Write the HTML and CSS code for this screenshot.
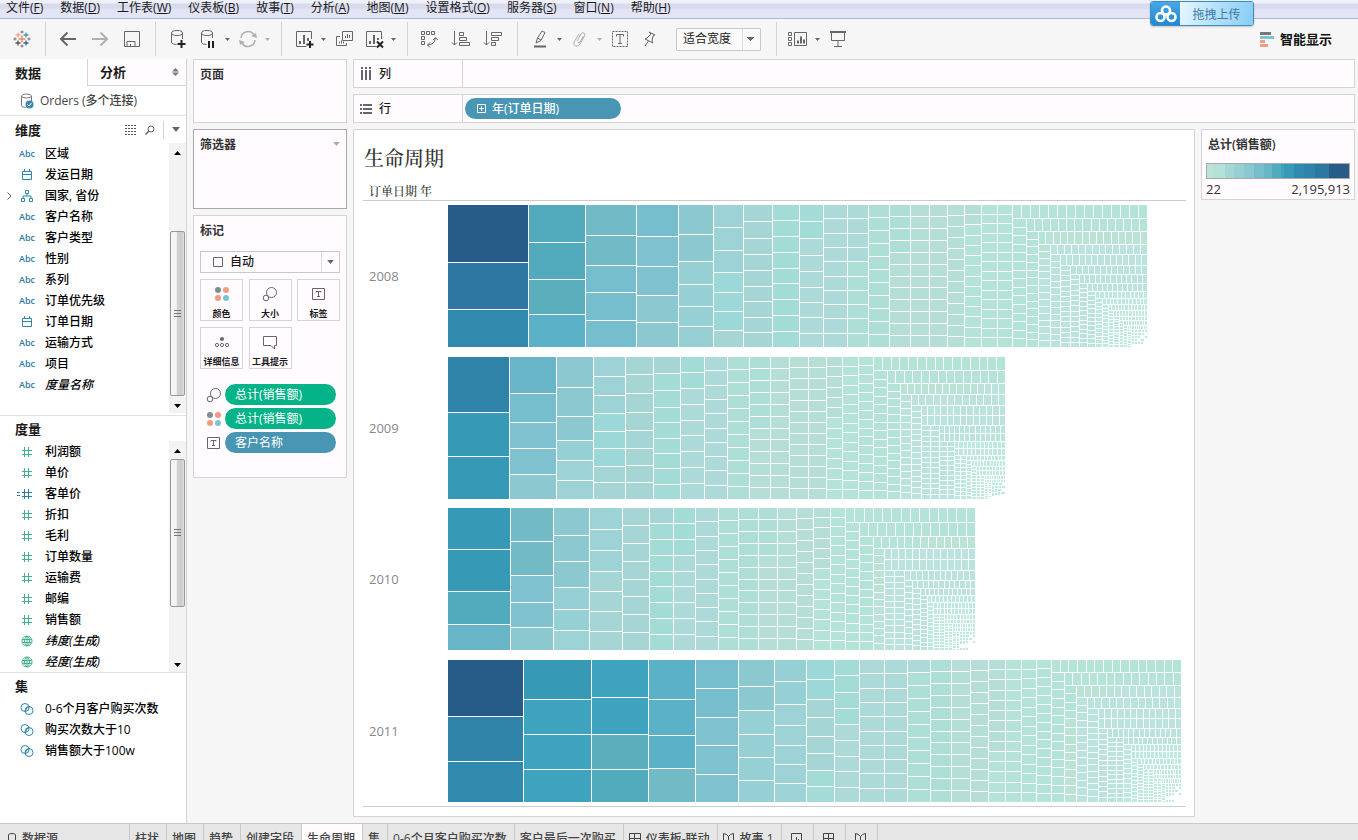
FILE: index.html
```html
<!DOCTYPE html>
<html lang="zh-CN">
<head>
<meta charset="utf-8">
<title>生命周期</title>
<link rel="stylesheet" href="styles.css">
</head>
<body>
<svg class="defs" aria-hidden="true">
  <symbol id="i-caret" viewBox="0 0 5 3"><path d="M0 0h5L2.500 3z" fill="currentColor"/></symbol>
  <symbol id="i-hash" viewBox="0 0 14 14"><path d="M4.500 2v10M8.500 2v10M2 5.500h10M2 9.500h10" class="st"/></symbol>
  <symbol id="i-calchash" viewBox="0 0 18 14"><path d="M8.500 2v10M12.500 2v10M6 5.500h10M6 9.500h10M1 5.500h3M1 8.500h3" class="st"/></symbol>
  <symbol id="i-date" viewBox="0 0 14 14"><path d="M2.500 3.500h9v8h-9zM2 6.500h10M4.500 1v3M9.500 1v3" class="st"/></symbol>
  <symbol id="i-tree" viewBox="0 0 14 14"><path d="M5.500 1.500h3v3h-3zM1.500 9.500h3v3h-3zM9.500 9.500h3v3h-3zM7 5v2M3 9V7h8v2" class="st"/></symbol>
  <symbol id="i-globe" viewBox="0 0 14 14"><path d="M7 2a5 5 0 1 0 0 10A5 5 0 1 0 7 2M7 2c-3.500 3-3.500 7 0 10M7 2c3.500 3 3.500 7 0 10M2.500 5.500h9M2.500 8.500h9M7 2v10" class="st"/></symbol>
  <symbol id="i-set" viewBox="0 0 14 14"><circle cx="5" cy="5.500" r="4" class="st"/><circle cx="9" cy="8.500" r="4" class="st"/><path d="M5.500 9.500q0-4 4-5" class="st"/></symbol>
  <symbol id="i-size" viewBox="0 0 16 16"><circle cx="9.500" cy="6.500" r="5" class="st"/><circle cx="4" cy="12" r="2.800" fill="#fffbff" stroke="currentColor"/></symbol>
  <symbol id="i-color" viewBox="0 0 16 16"><circle cx="4" cy="4" r="3" fill="#858b8c"/><circle cx="12" cy="4" r="3" fill="#f09c82"/><circle cx="4" cy="12" r="3" fill="#f09c82"/><circle cx="12" cy="12" r="3" fill="#7cc3d1"/></symbol>
  <symbol id="i-label" viewBox="0 0 16 16"><path d="M1.500 2.500h12v11h-12z" class="st"/><path d="M5 6.500v-1h5v1M7.500 5.500v5M6 10.500h3" class="st"/></symbol>
  <symbol id="i-detail" viewBox="0 0 16 16"><circle cx="8" cy="5" r="2" fill="currentColor"/><circle cx="3" cy="11" r="1.600" class="st"/><circle cx="8" cy="11" r="1.600" class="st"/><circle cx="13" cy="11" r="1.600" class="st"/></symbol>
  <symbol id="i-tip" viewBox="0 0 16 16"><path d="M1.500 2.500h13v9h-2v3.500l-3.500-3.500h-7.500z" class="st"/></symbol>
</svg>

<nav class="menu">
  <button>文件(<u>F</u>)</button><button>数据(<u>D</u>)</button><button>工作表(<u>W</u>)</button><button>仪表板(<u>B</u>)</button><button>故事(<u>T</u>)</button><button>分析(<u>A</u>)</button><button>地图(<u>M</u>)</button><button>设置格式(<u>O</u>)</button><button>服务器(<u>S</u>)</button><button>窗口(<u>N</u>)</button><button>帮助(<u>H</u>)</button>
</nav>
<button class="upload">
  <span class="upload-logo"><svg width="22" height="18" viewBox="0 0 22 18"><g fill="none" stroke="#fff" stroke-width="2.600"><circle cx="11" cy="5.500" r="4"/><circle cx="5.500" cy="12" r="4"/><circle cx="16.500" cy="12" r="4"/></g></svg></span>
  <span class="upload-text">拖拽上传</span>
</button>

<header class="toolbar">
  <div class="group home"><button class="tool" aria-label="开始"><svg width="18" height="18" viewBox="0 0 18 18"><g fill="none" stroke-width="1.300"><path d="M9 5.500v7M5.500 9h7" stroke="#f08a68" stroke-width="1.500"/><path d="M5 2.500v5M2.500 5h5" stroke="#eea78c"/><path d="M13 2.500v5M10.500 5h5" stroke="#4a93b0"/><path d="M5 10.500v5M2.500 13h5" stroke="#555"/><path d="M13 10.500v5M10.500 13h5" stroke="#2e6b98"/><path d="M9 .5v3M7.500 2h3M9 14.500v3M7.500 16h3M2 7.500v3M.5 9h3M16 7.500v3M14.500 9h3" stroke="#888"/></g></svg></button></div>
  <div class="group wide">
    <button class="tool" aria-label="后退"><svg width="18" height="18"><path d="M2 9h15M8.500 2.500L2 9l6.500 6.500" class="st" stroke-width="2"/></svg></button>
    <button class="tool off" aria-label="前进"><svg width="18" height="18"><path d="M1 9h15M9.500 2.500L16 9l-6.500 6.500" class="st" stroke-width="2"/></svg></button>
    <button class="tool" aria-label="保存"><svg width="18" height="18"><path d="M1.500 1.500h15v15h-15zM4 16v-4.500h8V16M7.500 14v2" class="st"/></svg></button>
  </div>
  <div class="group g3">
    <button class="tool" aria-label="新建数据源"><svg width="18" height="20"><path d="M13.500 4v6M2.500 4v9.500q1 2 5 2M2.500 4q0-2.500 5.500-2.500T13.500 4 8 6.500 2.500 4" class="st"/><path d="M12.500 11v8M8.500 15h8" stroke="#222" stroke-width="2"/></svg></button>
    <div class="split"><button class="tool" aria-label="暂停"><svg width="18" height="20"><path d="M13.500 4v5M2.500 4v9.500q1 2 5 2M2.500 4q0-2.500 5.500-2.500T13.500 4 8 6.500 2.500 4" class="st"/><path d="M10 12v7M14 12v7" stroke="#222" stroke-width="2"/></svg></button><button class="drop" aria-label="更多"><svg width="5" height="3"><use href="#i-caret"/></svg></button></div>
    <div class="split off"><button class="tool" aria-label="刷新"><svg width="18" height="18"><path d="M2 8a7 7 0 0 1 13-3M16 10a7 7 0 0 1-13 3" class="st" stroke-width="1.500"/><path d="M12 6l6 2-1-5zM6 12l-6-2 1 5z" fill="currentColor"/></svg></button><button class="drop" aria-label="更多"><svg width="5" height="3"><use href="#i-caret"/></svg></button></div>
  </div>
  <div class="group g4">
    <div class="split"><button class="tool" aria-label="新建工作表"><svg width="20" height="20"><path d="M17.500 10V2.500h-15v15h10" class="st"/><path d="M6 15v-3M10 15V6M14 12V9" stroke="currentColor" stroke-width="2"/><path d="M16 12v7M12.500 15.500h7" stroke="#222" stroke-width="2"/></svg></button><button class="drop" aria-label="更多"><svg width="5" height="3"><use href="#i-caret"/></svg></button></div>
    <button class="tool" aria-label="复制"><svg width="18" height="18"><path d="M7.500 1.500h10v9h-10zM5 6.500H1.500v9h10V13M10.500 8V6M12.500 8V4M14.500 8V5M4.500 13.500v-2M6.500 13.500v-3M8.500 13.500v-2" class="st"/></svg></button>
    <div class="split"><button class="tool" aria-label="清除"><svg width="20" height="20"><path d="M17.500 10V2.500h-15v15h10" class="st"/><path d="M6 15v-3M10 15V6M14 11V9" stroke="currentColor" stroke-width="2"/><path d="M13 12.500l6 6M19 12.500l-6 6" stroke="#222" stroke-width="2"/></svg></button><button class="drop" aria-label="更多"><svg width="5" height="3"><use href="#i-caret"/></svg></button></div>
  </div>
  <div class="group wide g5">
    <button class="tool" aria-label="交换行和列"><svg width="18" height="18"><path d="M1.500 1.500h3v3h-3zM6.500 1.500h3v3h-3zM11.500 1.500h3v3h-3zM1.500 6.500h3v3h-3zM1.500 11.500h3v3h-3zM7.500 15q7 0 8-7M10 12.500L7.500 15l2.500 2.500M13 10l2.500-2.500L18 10" class="st"/></svg></button>
    <button class="tool" aria-label="升序"><svg width="20" height="18"><path d="M3.500 1v14M1 12.500L3.500 15 6 12.500M8.500 2.500h4v3h-4zM8.500 7.500h7v3h-7zM8.500 12.500h10v3h-10z" class="st"/></svg></button>
    <button class="tool" aria-label="降序"><svg width="20" height="18"><path d="M3.500 1v14M1 12.500L3.500 15 6 12.500M8.500 2.500h10v3h-10zM8.500 7.500h7v3h-7zM8.500 12.500h4v3h-4z" class="st"/></svg></button>
  </div>
  <div class="group g6">
    <div class="split"><button class="tool" aria-label="突出显示"><svg width="16" height="20"><path d="M4 14l1.500-5L10 2l3 1.500-4 8z M5.500 9l3.500 2" class="st"/><path d="M2 17.500h12" stroke="currentColor" stroke-width="2"/></svg></button><button class="drop" aria-label="更多"><svg width="5" height="3"><use href="#i-caret"/></svg></button></div>
    <div class="split off"><button class="tool" aria-label="组"><svg width="16" height="18"><path d="M5 11l4-7q1.500-2 3-1t.5 3L8 14q-2 3-4.500 2T2 12L7 4M6 12q1 2 2 0l3.500-6" class="st"/></svg></button><button class="drop" aria-label="更多"><svg width="5" height="3"><use href="#i-caret"/></svg></button></div>
    <button class="tool" aria-label="标记标签"><svg width="18" height="18"><path d="M1.500 1.500h15v15h-15z" class="st" stroke-dasharray="2 1"/><path d="M5.500 6.500v-2h7v2M9 4.500v9M7 13.500h4" class="st"/></svg></button>
    <button class="tool" aria-label="固定"><svg width="16" height="18"><path d="M7 2l6 3-2 1-1 5 1 2-8-4 2-1 4-4zM6.500 11L3 16" class="st"/></svg></button>
    <select class="fit" aria-label="适合"><option>适合宽度</option></select>
  </div>
  <div class="group g7">
    <div class="split"><button class="tool" aria-label="显示卡"><svg width="22" height="18"><path d="M1.500 2.500h3v3h-3zM1.500 7.500h3v3h-3zM1.500 12.500h3v3h-3zM7.500 2.500h12v13h-12z" class="st"/><path d="M11 13.500v-3M14 13.500v-7M17 13.500v-4" stroke="currentColor" stroke-width="2"/></svg></button><button class="drop" aria-label="更多"><svg width="5" height="3"><use href="#i-caret"/></svg></button></div>
    <button class="tool" aria-label="演示模式"><svg width="18" height="18"><path d="M1 2h16" stroke="currentColor" stroke-width="2"/><path d="M2.500 3v7.500h13V3M9 11v5M5 16.500h8" class="st"/></svg></button>
  </div>
  <button class="showme"><svg width="14" height="15"><path d="M0 0h11v3H0z" fill="#777"/><path d="M0 4h14v3H0z" fill="#7cc3d1"/><path d="M0 8h5v3H0zM0 12h8v3H0z" fill="#f09c82"/></svg>智能显示</button>
</header>

<main class="body">
  <aside class="side">
    <div class="tabs"><button class="tab on">数据</button><button class="tab">分析<svg width="7" height="8"><path d="M0 3.500h7L3.500 0zM0 4.500h7L3.500 8z" fill="#777"/></svg></button></div>
    <button class="source"><svg width="14" height="16"><path d="M1.500 3q0-2 5-2t5 2-5 2-5-2v9.500q0 2 4 2M11.500 3v5" class="st"/><circle cx="9.500" cy="11.500" r="4" fill="#3d86b0"/><path d="M7.500 11.500l1.500 1.500 2.500-3" fill="none" stroke="#fff"/></svg>Orders (多个连接)</button>
    <section class="pane dims">
      <h2 class="head">维度
        <span class="head-tools"><svg width="12" height="10"><path d="M0 .5h12M0 3.500h12M0 6.500h12M0 9.500h12" stroke="#555" stroke-dasharray="2 1"/></svg><svg width="10" height="10"><circle cx="6" cy="4" r="3" class="st"/><path d="M4 6L.5 9.500" class="st" stroke-width="1.500"/></svg><i></i><svg width="8" height="5"><use href="#i-caret"/></svg></span></h2>
      <div class="scroller"><ul class="list">
        <li><b>Abc</b>区域</li>
        <li><svg width="14" height="14"><use href="#i-date"/></svg>发运日期</li>
        <li class="parent"><svg class="twist" width="5" height="8"><path d="M.5.5L4 4 .5 7.500" class="st"/></svg><svg width="14" height="14"><use href="#i-tree"/></svg>国家, 省份</li>
        <li><b>Abc</b>客户名称</li><li><b>Abc</b>客户类型</li><li><b>Abc</b>性别</li><li><b>Abc</b>系列</li><li><b>Abc</b>订单优先级</li>
        <li><svg width="14" height="14"><use href="#i-date"/></svg>订单日期</li>
        <li><b>Abc</b>运输方式</li><li><b>Abc</b>项目</li><li><b>Abc</b><em>度量名称</em></li>
      </ul><div class="bar low"><svg width="7" height="4"><path d="M0 4h7L3.500 0z"/></svg><span class="thumb"></span><svg width="7" height="4"><path d="M0 0h7L3.500 4z"/></svg></div></div>
    </section>
    <section class="pane meas">
      <h2 class="head">度量</h2>
      <div class="scroller"><ul class="list green">
        <li><svg width="14" height="14"><use href="#i-hash"/></svg>利润额</li><li><svg width="14" height="14"><use href="#i-hash"/></svg>单价</li>
        <li class="calc"><svg width="18" height="14"><use href="#i-calchash"/></svg>客单价</li>
        <li><svg width="14" height="14"><use href="#i-hash"/></svg>折扣</li><li><svg width="14" height="14"><use href="#i-hash"/></svg>毛利</li><li><svg width="14" height="14"><use href="#i-hash"/></svg>订单数量</li><li><svg width="14" height="14"><use href="#i-hash"/></svg>运输费</li><li><svg width="14" height="14"><use href="#i-hash"/></svg>邮编</li><li><svg width="14" height="14"><use href="#i-hash"/></svg>销售额</li>
        <li><svg width="14" height="14"><use href="#i-globe"/></svg><em>纬度(生成)</em></li><li><svg width="14" height="14"><use href="#i-globe"/></svg><em>经度(生成)</em></li>
      </ul><div class="bar high"><svg width="7" height="4"><path d="M0 4h7L3.500 0z"/></svg><span class="thumb"></span><svg width="7" height="4"><path d="M0 0h7L3.500 4z"/></svg></div></div>
    </section>
    <section class="pane sets">
      <h2 class="head">集</h2>
      <ul class="list">
        <li><svg width="14" height="14"><use href="#i-set"/></svg>0-6个月客户购买次数</li><li><svg width="14" height="14"><use href="#i-set"/></svg>购买次数大于10</li><li><svg width="14" height="14"><use href="#i-set"/></svg>销售额大于100w</li>
      </ul>
    </section>
  </aside>

  <div class="cards">
    <section class="card pages"><h3>页面</h3></section>
    <section class="card filters"><h3>筛选器</h3><svg width="7" height="4"><use href="#i-caret"/></svg></section>
    <section class="card marks">
      <h3>标记</h3>
      <button class="type"><svg width="11" height="11"><path d="M.5.5h9v9h-9z" class="st"/></svg>自动<span><svg width="7" height="4"><use href="#i-caret"/></svg></span></button>
      <div class="tiles">
        <button><svg width="16" height="16"><use href="#i-color"/></svg>颜色</button><button><svg width="16" height="16"><use href="#i-size"/></svg>大小</button><button><svg width="16" height="16"><use href="#i-label"/></svg>标签</button><button><svg width="16" height="16"><use href="#i-detail"/></svg>详细信息</button><button><svg width="16" height="16"><use href="#i-tip"/></svg>工具提示</button>
      </div>
      <ul class="pills">
        <li><svg width="16" height="16"><use href="#i-size"/></svg><button class="pill green">总计(销售额)</button></li>
        <li><svg width="16" height="16"><use href="#i-color"/></svg><button class="pill green">总计(销售额)</button></li>
        <li><svg width="16" height="16"><use href="#i-label"/></svg><button class="pill">客户名称</button></li>
      </ul>
    </section>
  </div>

  <div class="work">
    <div class="shelf"><span class="shelf-name"><svg width="12" height="13"><path d="M2 0v2M6 0v2M10 0v2M2 3v10M6 3v10M10 3v10" stroke="#666" stroke-width="2"/></svg>列</span></div>
    <div class="shelf"><span class="shelf-name"><svg width="12" height="12"><path d="M0 2h2M0 6h2M0 10h2M3 2h9M3 6h9M3 10h9" stroke="#666" stroke-width="2"/></svg>行</span><button class="pill date"><svg width="9" height="9"><path d="M.5.5h8v8h-8zM4.500 2v5M2 4.500h5" fill="none" stroke="#fff"/></svg>年(订单日期)</button></div>
    <div class="view">
      <section class="sheet">
        <h1>生命周期</h1>
        <div class="axis">订单日期 年</div>
        <div class="chart" id="chart"></div>
      </section>
      <section class="legend">
        <h3>总计(销售额)</h3>
        <div class="ramp"></div>
        <div class="range"><span>22</span><span>2,195,913</span></div>
      </section>
    </div>
  </div>
</main>

<footer class="sheets">
  <button class="ds"><svg width="8" height="11"><path d="M.5 2q0-1.500 3.500-1.500T7.500 2v7Q7.500 10.500 4 10.500T.5 9z" class="st"/></svg>数据源</button><button>柱状</button><button>地图</button><button>趋势</button><button>创建字段</button><button class="on">生命周期</button><button>集</button><button>0-6个月客户购买次数</button><button>客户最后一次购买</button><button><svg width="12" height="12"><path d="M.5.5h11v11H.5zM5.500 0v11M0 5.500h11" class="st"/></svg>仪表板-联动</button><button><svg width="12" height="12"><path d="M.5.5l3 1 2 2 2-2 3-1v10l-5-1-5 1zM5.500 3v6" class="st"/></svg>故事 1</button><button class="new" aria-label="新建工作表"><svg width="12" height="12"><path d="M.5.5h10v10H.5zM3.500 9V7M5.500 9V4M7.500 9V6" class="st"/></svg></button><button class="new" aria-label="新建仪表板"><svg width="12" height="12"><path d="M.5.5h10v10H.5zM5.500 0v10M0 5.500h10" class="st"/></svg></button><button class="new" aria-label="新建故事"><svg width="12" height="12"><path d="M.5.5l3 1 2 2 2-2 3-1v10l-5-1-5 1zM5.500 3v6" class="st"/></svg></button>
</footer>
<script src="chart.js"></script>
</body>
</html>
```
FILE: styles.css
```css
* { box-sizing: border-box; }
html, body { height: 100%; margin: 0; }
body {
  display: flex; flex-direction: column; overflow: hidden; position: relative;
  background: #f6f6f6; color: #1a1a1a;
  font: 12px/16px "Open Sans", "Noto Sans CJK SC", sans-serif;
}
button, select { font: inherit; color: inherit; background: none; border: 0; padding: 0; margin: 0; white-space: nowrap; }
h1, h2, h3, ul { margin: 0; padding: 0; font-size: inherit; list-style: none; }
svg { display: block; flex: none; }
.defs { position: absolute; width: 0; height: 0; }
.st { fill: none; stroke: currentColor; }

.menu { flex: none; height: 19px; display: flex; align-items: center; gap: 17px; padding: 0 6px 2px; border-bottom: 1px solid #b4b9cf; background: linear-gradient(#eef0fa 0 3px, #d9dbec 4px 8px, #e2e5f6 10px); }
.upload { position: absolute; top: 1px; right: 104px; display: flex; width: 104px; height: 25px; border: 1px solid #3b8cc0; border-radius: 3px; overflow: hidden; box-shadow: 0 1px 2px #8886; }
.upload-logo { width: 29px; height: 100%; display: grid; place-items: center; background: linear-gradient(#4aa6e6, #2188d2); }
.upload-text { flex: 1; height: 100%; line-height: 25px; color: #3b7ba8; background: linear-gradient(100deg, #e6f6ff, #b4e0fa 50%, #8accf4); }

.toolbar { flex: none; height: 40px; display: flex; align-items: center; color: #666; }
.group { display: flex; align-items: center; gap: 6px; height: 34px; padding-left: 10px; border-right: 1px solid #d4d4d4; }
.home { width: 46px; }
.wide { gap: 8px; width: 110px; }
.g3, .g4 { width: 126px; }
.g5 { padding-left: 9px; }
.g6 { width: 259px; }
.g7 { border: 0; padding-left: 9px; }
.tool { width: 24px; height: 24px; display: grid; place-items: center; }
.split { display: flex; align-items: center; }
.drop { width: 10px; display: flex; justify-content: flex-end; }
.off { color: #b0b0b0; }
.fit { appearance: none; width: 85px; height: 23px; margin-left: 8px; padding: 0 6px; color: #222; border: 1px solid #c8c8c8; border-radius: 1px;
  background: linear-gradient(#ddd, #ddd) right 17px top / 1px 100% no-repeat, linear-gradient(to bottom left, #666 50%, transparent 0) right 9px center / 4px 4px no-repeat, linear-gradient(to bottom right, #666 50%, transparent 0) right 5px center / 4px 4px no-repeat, #fafafa; }
.showme { margin-left: auto; padding-right: 26px; display: flex; align-items: center; gap: 6px; font-size: 13px; font-weight: 600; color: #111; }

.body { flex: 1; min-height: 0; display: flex; gap: 6px; padding-right: 3px; }
.side { flex: none; width: 187px; border-right: 1px solid #d4d4d4; background: #fff; overflow: hidden; }
.tabs { display: flex; height: 27px; font-size: 13px; font-weight: 600; }
.tab { flex: 1; display: flex; align-items: center; justify-content: space-between; padding: 0 7px 0 12px; border: solid #d4d4d4; border-width: 0 0 1px 1px; background: #fffbff; }
.tab.on { flex: none; width: 87px; padding-left: 15px; border: 0; background: none; }
.source { display: flex; align-items: center; gap: 6px; width: 100%; height: 30px; padding-left: 20px; color: #444; font-weight: 500; border-bottom: 1px solid #e2e2e2; }
.source svg { color: #777; }
.head { display: flex; align-items: center; height: 27px; padding-left: 15px; font-size: 13px; font-weight: 600; }
.head-tools { margin-left: auto; display: flex; align-items: center; gap: 8px; padding-right: 6px; color: #666; }
.head-tools i { width: 1px; height: 18px; background: #d4d4d4; }
.pane { border-bottom: 1px solid #e2e2e2; }
.dims { height: 300px; }
.meas, .sets { border-bottom: 1px solid #e2e2e2; }
.meas .head, .sets .head { height: 25px; }
.sets { border: 0; }
.scroller { display: flex; }
.dims .scroller { height: 270px; }
.list { flex: 1; font-weight: 500; color: #000; }
.list li { height: 21px; display: flex; align-items: center; gap: 11px; padding-left: 20px; }
.list li > b { width: 14px; font: 9px/14px "Open Sans", sans-serif; font-weight: 600; color: #2e7ba3; display: flex; justify-content: center; }
.list li > svg { color: #2e86ab; }
.list.green li > svg { color: #45b08c; }
.list li.parent { gap: 8px; padding-left: 7px; }
.list li.parent .twist { color: #555; }
.list li.parent svg + svg { margin-right: 3px; }
.list li.calc { padding-left: 16px; }
.list.green .calc > svg { color: #2e7ba3; }
.bar { width: 17px; background: #f3f3f3; display: flex; flex-direction: column; align-items: center; padding: 8px 1px 5px 0; }
.thumb { width: 15px; border: 1px solid #999; border-radius: 2px; background: repeating-linear-gradient(#777 0 1px, transparent 1px 3px) center / 7px 8px no-repeat, linear-gradient(90deg, #f5f5f5 40%, #d2d2d2 50%, #ccc 80%, #e2e2e2); }
.low .thumb { height: 165px; margin: auto 0 8px; }
.high .thumb { height: 148px; margin: 6px 0 auto; }

.cards { flex: none; width: 154px; display: flex; flex-direction: column; gap: 6px; }
.card, .legend, .shelf { border: 1px solid #d4d4d4; background: #fffbff; }
.card { padding: 7px 6px; }
h3 { font-weight: 600; color: #333; }
.pages { height: 64px; }
.filters { height: 80px; border-color: #aaa; display: flex; justify-content: space-between; }
.filters svg { margin-top: 5px; color: #aaa; }
.marks { height: 263px; }
.type { width: 100%; height: 22px; margin-top: 12px; display: flex; align-items: center; gap: 6px; padding-left: 12px; border: 1px solid #c8c8c8; font-weight: 500; }
.type > svg, .type span { color: #666; }
.type span { margin-left: auto; width: 18px; height: 100%; display: grid; place-items: center; border-left: 1px solid #ddd; }
.tiles { margin-top: 6px; display: grid; grid-template-columns: repeat(3, 43px); justify-content: space-between; row-gap: 6px; }
.tiles button { height: 42px; display: flex; flex-direction: column; align-items: center; justify-content: space-between; padding: 6px 0 0; border: 1px solid #d4d4d4; font-size: 9px; line-height: 13px; font-weight: 700; }
.tiles svg, .pills svg { color: #666; }
.pills { margin-top: 15px; display: grid; gap: 3px; }
.pills li { display: flex; align-items: center; gap: 3px; padding: 0 4px 0 6px; }
.pill { flex: 1; height: 21px; border-radius: 11px; padding: 0 10px; text-align: left; color: #fff; background: #4996b4; }
.pill.green { background: #05b388; }

.work { flex: 1; min-width: 0; display: flex; flex-direction: column; gap: 6px; }
.shelf { flex: none; height: 29px; display: flex; align-items: center; gap: 2px; }
.shelf-name { width: 109px; height: 100%; display: flex; align-items: center; gap: 7px; padding-left: 6px; border-right: 1px solid #d4d4d4; font-weight: 500; }
.pill.date { flex: none; width: 156px; display: flex; align-items: center; gap: 6px; padding-left: 12px; font-weight: 500; }
.view { flex: 1; min-height: 0; display: flex; align-items: flex-start; gap: 6px; }
.sheet { flex: 1; min-width: 0; height: 688px; display: flex; flex-direction: column; padding: 17px 8px 9px 9px; border: 1px solid #d4d4d4; background: #fff; }
.sheet h1 { padding-left: 1px; font: 500 20px/22px "Noto Serif CJK SC", "Noto Sans CJK SC", serif; color: #333; }
.axis { margin-top: 13px; height: 19px; padding-left: 6px; border-bottom: 1px solid #ccc; color: #333; font: 500 12px/18px "Noto Serif CJK SC", "Noto Sans CJK SC", serif; }
.chart { flex: 1; display: flex; flex-direction: column; justify-content: space-between; padding: 4px 0; border-bottom: 1px solid #ccc; }
.year { display: flex; align-items: center; color: #888; font-size: 13px; }
.year-name { flex: none; width: 85px; padding-left: 6px; }
.year-map { flex: 1; min-width: 0; height: 142px; }
.legend { flex: none; width: 154px; padding: 7px 4px 2px; }
.legend h3 { padding-left: 2px; }
.ramp { margin-top: 10px; height: 16px; border: 1px solid #aaa; background: linear-gradient(90deg, #bbe3d8 0 4%, #b4e2d8 0 13%, #a3d6d5 0 19%, #96d0d4 0 26%, #8bc8d0 0 33%, #76bdce 0 40%, #68b5c7 0 46%, #52aabd 0 52%, #3ea3bf 0 54%, #3699b5 0 61%, #2f8aae 0 68%, #2f83a9 0 76%, #2e77a2 0 86%, #275c89 0); }
.range { display: flex; justify-content: space-between; margin-top: 2px; font-size: 13px; color: #333; }

.sheets { flex: none; height: 17px; display: flex; overflow: hidden; border-top: 1px solid #c8c8c8; background: #e6e6e6; color: #444; font-weight: 500; }
.sheets button { height: 29px; display: flex; align-items: center; gap: 5px; padding: 0 7px 0 5px; border-right: 1px solid #c8c8c8; }
.sheets button.ds { width: 130px; padding-left: 8px; gap: 6px; }
.sheets .on { background: #fffbff; }
.sheets button.new { width: 32px; padding: 0; justify-content: center; }
```
FILE: chart.js
```js
const palette = {
  A: '#275c89', B: '#2e77a2', C: '#2f83a9', D: '#2f8aae', E: '#3699b5', F: '#3ea3bf',
  G: '#52aabd', H: '#5aaebc', I: '#5bb1c7', J: '#68b5c7', K: '#72bac6', L: '#76bdce',
  M: '#80c1d0', N: '#8bc8d0', O: '#96d0d4', P: '#9dd2d7', Q: '#9dd8d9', R: '#a5d6d5',
  S: '#a3dcd6', T: '#addad8', U: '#addfd7', V: '#b5dfd6', W: '#b4e4d8', X: '#bbe3d5',
  Y: '#bbe3de', Z: '#bee9df'
};

// Strips peel off the left (c) or top (r) of the remaining area:
// kind+thickness, cell count or comma-separated cell sizes, colour run.
const years = [
  { name: '2008', width: 699, strips: `c81 58,47,38 ABD;c57 38,37,35,33 GGHI;c51 31,30,27,28,27 KKL;c42 32,30,29,27,25 LMMN;c35 30,27,23,22,20,21 NNO;c30 23,23,22,20,19,19,17 PPPQQQR;c29 17,17,16,16,16,15,16,15,15 R;c27 9 S;c24 17,17,17,16,16,15,15,16,14 SST;c24 10 T;c21 10 TTTTU;c21 11 U;c21 12 UUUUV;c19 12 V;c18 12 V;c17 13 V;c17 14 VVW;c16 15 W;c15 15 W;r14 15 W;c14 15 W;r13 15 W;c12 15 W;r13 15 WX;c12 15 XXY;r10 14 Y;c10 14 Y;r11 14 Y;c10 16 Y;r9 13 Y;c9 14 Y;r9 13 Y;c8 14 Y;r8 12 Y;c8 13 Y;r7 12 Z;c7 13 Z;r6 12 Z;c6 12 Z;r6 12 Z;c5 12 Z;r6 11 Z;c6 12 Z;r4 9 Z;c4 9 Z;r5 9 Z;c4 8 Z;r4 9 Z;c4 8 Z` },
  { name: '2009', width: 557, strips: `c62 56,44,43 CE;c47 37,29,26,26,25 JLMMN;c37 31,29,24,20,20,19 NNNOP;c32 20,19,18,18,17,18,16,17 PPPQQQR;c28 18,19,19,18,18,17,17,17 R;c27 17,17,17,15,16,15,15,16,15 RS;c24 9 SST;c23 10 T;c22 11 U;c21 12 UUUUUUV;c19 12 V;c19 13 V;c18 13 V;c16 14 VVVVVVW;c16 15 W;c15 16 W;r14 15 W;c14 15 W;r13 14 W;c13 15 W;r11 15 XXXXXXXXXXXY;c11 15 Y;r11 13 Y;c10 16 Y;r10 13 Y;r10 13 Y;c9 14 Y;c9 14 Y;r8 13 Y;r8 13 Y;c8 12 Y;c7 12 Y;r7 12 Z;r7 12 Z;c6 11 Z;c6 11 Z;r5 11 Z;c5 11 Z;r6 11 Z;c5 11 Z;r4 9 Z;r5 9 Z;c4 8 Z;c4 8 Z;r4 9 Z;r3 9 Z;c4 8 Z;c3 8 Z` },
  { name: '2010', width: 527, strips: `c63 42,42,33,26 EEGJ;c43 34,34,27,25,23 KKMMN;c36 28,26,26,22,21,20 NNNOOP;c33 22,21,21,20,20,20,19 PPPR;c27 8 R;c24 9 RS;c22 9 SSST;c23 10 T;c20 11 U;c20 12 U;c19 12 UUUUV;c19 12 V;c17 13 V;c17 14 VVVVVVW;c15 15 W;r15 14 W;c14 14 W;r14 13 W;c14 13 W;r12 13 WWWWWWX;c11 14 XXXXXXXY;r11 13 Y;r11 13 Y;c10 13 Y;c10 13 Y;r10 12 Y;c8 12 Y;r8 12 Y;c8 12 Y;r7 12 Y;c7 13 Y;r7 12 Z;c6 12 Z;r6 12 Z;r6 12 Z;c6 12 Z;c5 12 Z;r5 10 Z;r4 10 Z;c4 10 Z;c4 10 Z;r4 9 Z;r4 9 Z;c4 8 Z;c3 8 Z` },
  { name: '2011', width: 733, strips: `c76 57,45,41 ACD;c68 40,35,35,33 EF;c57 38,37,35,33 FFHG;c47 40,36,33,34 IIIK;c43 29,29,28,29,28 LLMMM;c36 27,24,24,23,23,22 NNO;c32 22,23,21,20,19,19,19 OOP;c28 20,20,18,19,17,17,16,16 QQRRRRS;c25 16,17,16,16,16,16,15,16,15 SSSST;c25 10 T;c23 10 T;c23 11 TU;c21 12 U;c19 12 V;c18 13 V;c17 14 VVVVVVVVVW;c16 14 W;c15 15 W;c15 16 W;r13 15 W;c13 15 W;r13 14 W;c12 14 WWWWX;r12 14 XXXXXY;c11 14 Y;r11 13 Y;c11 15 Y;r10 13 Y;r10 13 Y;c9 14 Y;r9 14 Y;c9 14 Y;c7 14 Y;r7 12 Y;c8 12 Z;r7 13 Z;r7 13 Z;c6 12 Z;r6 12 Z;c6 12 Z;r5 11 Z;c5 11 Z;c5 11 Z;r5 10 Z;r4 10 Z;c4 9 Z;c4 9 Z;r5 9 Z;c4 8 Z` }
];

const HEIGHT = 143;

function cellSizes(spec, total) {
  if (spec.includes(',')) return spec.split(',').map(Number);
  const n = Number(spec);
  return Array.from({ length: n }, (_, i) => Math.round(total * (i + 1) / n) - Math.round(total * i / n));
}

function layout(year) {
  const cells = [];
  const right = year.width + 1;
  let x = 0, y = 0;
  const strip = (kind, thick, spec, colours) => {
    const total = kind === 'c' ? HEIGHT - y : right - x;
    let at = kind === 'c' ? y : x;
    cellSizes(spec, total).forEach((size, i) => {
      const fill = palette[colours[Math.min(i, colours.length - 1)]];
      cells.push(kind === 'c' ? [x, at, thick - 1, size - 1, fill] : [at, y, size - 1, thick - 1, fill]);
      at += size;
    });
    if (kind === 'c') x += thick; else y += thick;
  };
  year.strips.split(';').forEach(entry => {
    const [head, spec, colours] = entry.split(' ');
    strip(head[0], Number(head.slice(1)), spec, colours);
  });
  let kind = 'r';
  while (right - x > 3 && HEIGHT - y > 3) {
    const total = kind === 'c' ? HEIGHT - y : right - x;
    strip(kind, 3, String(Math.max(1, Math.floor(total / 3))), 'Z');
    kind = kind === 'r' ? 'c' : 'r';
  }
  const r = 16;
  return cells.filter(([cx, cy], i) => {
    const dx = cx + 1 - (right - r), dy = cy + 1 - (HEIGHT - r);
    if (dx < 0 || dy < 0) return true;
    const d = dx * dx + dy * dy;
    return d < r * r && (d < 110 || i % 2 === 0);
  });
}

const full = 738;
document.getElementById('chart').innerHTML = years.map(year => {
  const rects = layout(year).map(([x, y, w, h, fill]) =>
    `<rect x="${x}" y="${y}" width="${w}" height="${h}" fill="${fill}"/>`).join('');
  return `<div class="year"><span class="year-name">${year.name}</span>` +
    `<svg class="year-map" viewBox="0 0 ${full} 142" preserveAspectRatio="none" shape-rendering="crispEdges" role="img" aria-label="${year.name}">${rects}</svg></div>`;
}).join('');
```
